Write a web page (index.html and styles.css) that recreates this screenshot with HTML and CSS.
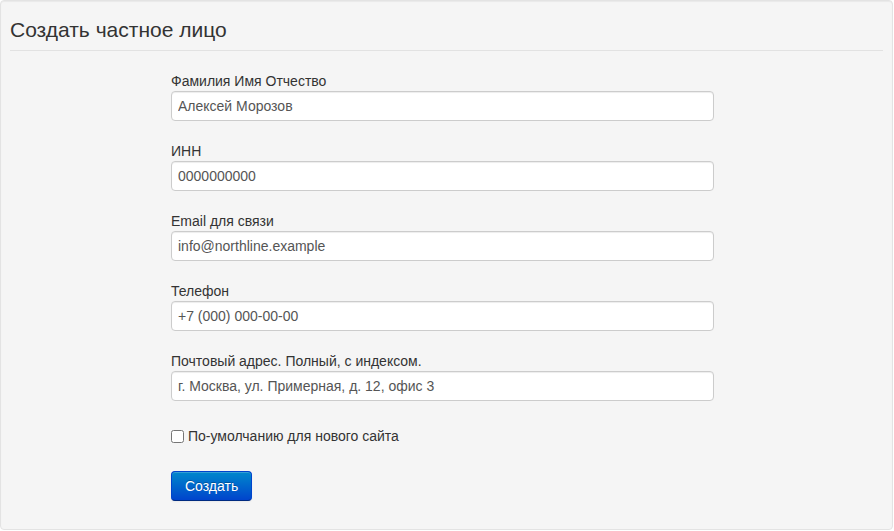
FILE: index.html
```html
<!DOCTYPE html>
<html lang="ru">
<head>
<meta charset="utf-8">
<title>Создать частное лицо</title>
<link rel="stylesheet" href="styles.css">
</head>
<body>
<div class="well">
  <h1 class="title">Создать частное лицо</h1>
  <hr class="divider">
  <form class="form">
    <div class="group">
      <label class="label" for="f1">Фамилия Имя Отчество</label>
      <input class="input" id="f1" type="text" value="Алексей Морозов">
    </div>
    <div class="group">
      <label class="label" for="f2">ИНН</label>
      <input class="input" id="f2" type="text" value="0000000000">
    </div>
    <div class="group">
      <label class="label" for="f3">Email для связи</label>
      <input class="input" id="f3" type="text" value="info@northline.example">
    </div>
    <div class="group">
      <label class="label" for="f4">Телефон</label>
      <input class="input" id="f4" type="text" value="+7 (000) 000-00-00">
    </div>
    <div class="group">
      <label class="label" for="f5">Почтовый адрес. Полный, с индексом.</label>
      <input class="input" id="f5" type="text" value="г. Москва, ул. Примерная, д. 12, офис 3">
    </div>
    <label class="check"><input type="checkbox" class="checkbox"> По-умолчанию для нового сайта</label>
    <div class="actions">
      <button type="button" class="btn">Создать</button>
    </div>
  </form>
</div>
</body>
</html>
```

FILE: styles.css
```css
html, body {
  margin: 0;
  padding: 0;
  background: #ffffff;
}
body {
  font-family: "Liberation Sans", Arial, sans-serif;
  font-size: 14px;
  line-height: 20px;
  color: #333333;
}
.well {
  width: 893px;
  height: 530px;
  box-sizing: border-box;
  background: #f5f5f5;
  border: 1px solid #e3e3e3;
  border-radius: 4px;
  box-shadow: inset 0 1px 1px rgba(0,0,0,0.05);
  padding: 14px 9px 0 9px;
}
.title {
  margin: 0;
  font-size: 21px;
  line-height: 30px;
  font-weight: normal;
  color: #333333;
}
.divider {
  margin: 5px 0 0 0;
  border: 0;
  border-top: 1px solid #e2e2e2;
  height: 0;
}
.form {
  margin: 0 0 0 161px;
  width: 543px;
  padding-top: 20px;
  display: flex;
  flex-direction: column;
}
.group {
  display: flex;
  flex-direction: column;
  margin-bottom: 20px;
}
.label {
  display: block;
  line-height: 20px;
  color: #333333;
}
.input {
  box-sizing: border-box;
  height: 30px;
  width: 100%;
  margin: 0;
  padding: 4px 6px;
  border: 1px solid #cccccc;
  border-radius: 4px;
  background: #ffffff;
  font-family: "Liberation Sans", Arial, sans-serif;
  font-size: 14px;
  line-height: 20px;
  color: #555555;
  box-shadow: inset 0 1px 1px rgba(0,0,0,0.075);
  outline: none;
}
.check {
  display: flex;
  align-items: center;
  gap: 4px;
  height: 20px;
  margin-top: 5px;
  color: #333333;
}
.checkbox {
  margin: 0;
  width: 13px;
  height: 13px;
}
.actions {
  margin-top: 25px;
}
.btn {
  box-sizing: border-box;
  height: 30px;
  padding: 4px 13px;
  font-family: "Liberation Sans", Arial, sans-serif;
  font-size: 14px;
  line-height: 20px;
  color: #ffffff;
  text-shadow: 0 -1px 0 rgba(0,0,0,0.25);
  background-color: #006dcc;
  background-image: linear-gradient(to bottom, #0088cc, #0044cc);
  border: 1px solid #0044cc;
  border-bottom-color: #002a80;
  border-radius: 4px;
  box-shadow: inset 0 1px 0 rgba(255,255,255,0.2), 0 1px 2px rgba(0,0,0,0.05);
  cursor: pointer;
}
```
